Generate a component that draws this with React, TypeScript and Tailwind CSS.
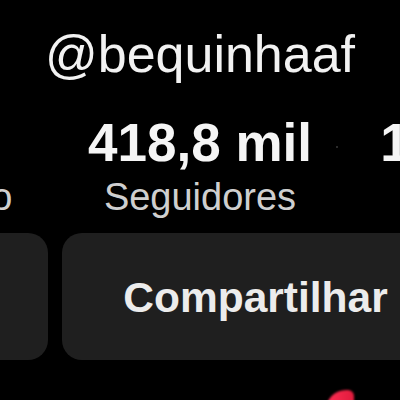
import React from "react";

const font = { fontFamily: '"Liberation Sans", Arial, sans-serif' };

function Stat({ value, label, width }: { value: string; label: string; width: string }) {
  return (
    <div className={`flex flex-col items-center shrink-0 ${width}`}>
      <div className="text-[53px] font-bold leading-none text-[#f5f5f5] whitespace-nowrap">{value}</div>
      <div className="mt-[9px] text-[38px] leading-none text-[#cfcfcf] whitespace-nowrap">{label}</div>
    </div>
  );
}

export default function App() {
  return (
    <div className="w-[400px] h-[400px] bg-black overflow-hidden relative" style={font}>
      {/* username */}
      <div className="pt-[28px] flex justify-center">
        <div className="text-[52px] leading-none text-[#f2f2f2] whitespace-nowrap">@bequinhaaf</div>
      </div>

      {/* stats */}
      <div className="mt-[36px] flex w-max -ml-[192px]">
        <Stat value="140" label="Seguindo" width="w-[248px]" />
        <div className="w-[14px] shrink-0" />
        <Stat value="418,8 mil" label="Seguidores" width="w-[260px]" />
        <div className="w-[14px] shrink-0 flex justify-center">
          <div className="mt-[30px] w-[2px] h-[2px] rounded-full bg-[#3a3a3a]" />
        </div>
        <Stat value="12,3 mi" label="Curtidas" width="w-[252px]" />
      </div>

      {/* buttons */}
      <div className="mt-[17px] flex gap-[14px] w-max -ml-[100px]">
        <div className="w-[148px] h-[127px] rounded-[20px] bg-[#1f1f1f] shrink-0" />
        <div className="w-[387px] h-[127px] rounded-[20px] bg-[#1f1f1f] shrink-0 flex items-center justify-center pt-[3px]">
          <span className="text-[42.5px] font-bold leading-none text-[#ececec] whitespace-nowrap">Compartilhar</span>
        </div>
      </div>

      {/* red shape peeking at bottom */}
      <div className="absolute left-[326px] top-[390px] w-[28px] h-[24px] rounded-tl-[20px] rounded-tr-[6px] bg-gradient-to-r from-[#ff2e55] to-[#e01b3c] blur-[1px]" />
    </div>
  );
}
